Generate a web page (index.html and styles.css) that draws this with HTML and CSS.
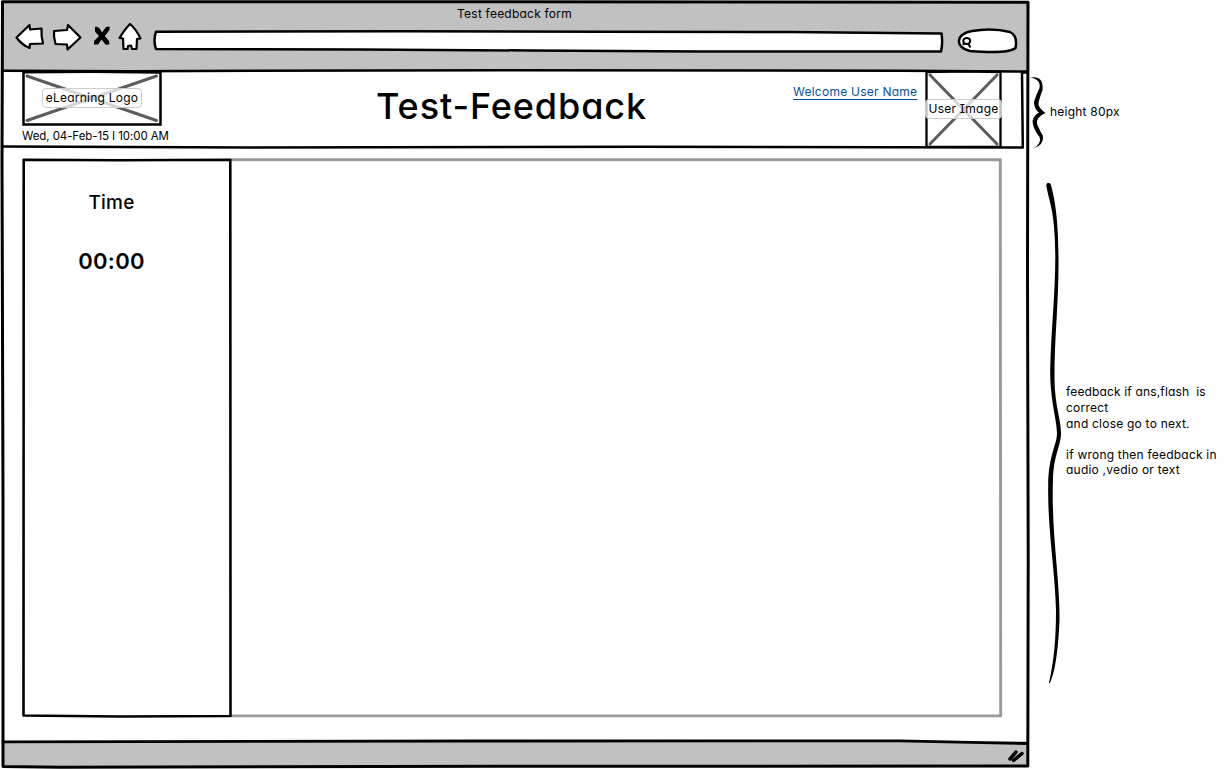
FILE: index.html
```html
<!DOCTYPE html>
<html lang="en">
<head>
<meta charset="utf-8">
<title>Test feedback form</title>
<link rel="stylesheet" href="styles.css">
</head>
<body>
<main class="browser">
  <header class="chrome">
    <div class="window-title"><span>Test feedback form</span></div>
    <nav class="toolbar">
      <svg class="nav-icons" width="130" height="32" viewBox="14 21 130 32">
        <g fill="#fff" stroke="#000" stroke-width="2.200" stroke-linejoin="round" stroke-linecap="round">
          <path d="M16.500 37.500 29.500 25 30 29.500 41.500 28.500Q41 36 43 43.500L30 44 29.500 48Q22 45 16.500 37.500Z"/>
          <path d="M54 31 67 30 68 25 80.500 37.500 67.500 49.500 67 44.500 55.500 44Q53.500 37 54 31Z"/>
          <path d="M130 24Q125 29 119.500 38L123 38.500 123.500 49 127.500 49 128 46 131 45.500 132 49 136.500 49 137 39 140.500 38.500Q136 29 130 24Z"/>
        </g>
        <path d="M95 27Q99 26 102 32.500L106 27 109.500 26.500 109.500 30 104.800 36 109 41 109.500 44 106 45 101.500 39.500 98 44.500 94 44.500 94 41 99 36 95 31.500 95 27Z"/>
      </svg>
      <svg class="address" width="792" height="24" viewBox="152 29 792 24">
        <path d="M156 31.700 400 31.200 600 31.700 790 32 941.500 33.500Q943 43 941 51.500L700 51.500 530 50.500 360 49.500 156 49Q153 41 156 31.700Z" fill="#fff" stroke="#000" stroke-width="2.500" stroke-linejoin="round"/>
      </svg>
      <svg class="search" width="64" height="28" viewBox="956 27 64 28">
        <path d="M972 31Q992 27.500 1010 32Q1018 36 1015.500 48C1010 53 990 52.500 970 51C954 47 956 34 972 31Z" fill="#fff" stroke="#000" stroke-width="2.500"/>
        <ellipse cx="966.700" cy="41" rx="3.500" ry="3" fill="none" stroke="#000" stroke-width="2"/>
        <path d="M968 43.500 970.500 47.500M962.500 44.500 965 43.500" fill="none" stroke="#000" stroke-width="2"/>
      </svg>
    </nav>
  </header>
  <section class="banner">
    <div class="brand">
      <div class="image-box logo">
        <svg class="sketch" viewBox="0 0 140 55"><path d="M5 5 134.500 49.500M134.500 5 5 49.500" stroke="#5c5c5c" stroke-width="3" stroke-linecap="round"/><path d="M1.500 1.300 70 .8 138.500 1.500V53.500H1.500Z" fill="none" stroke="#000" stroke-width="2.500"/></svg>
        <span class="tag logo-tag"><span>eLearning Logo</span></span>
      </div>
      <div class="date">Wed, 04-Feb-15 I 10:00 AM</div>
    </div>
    <h1>Test-Feedback</h1>
    <a class="welcome">Welcome User Name</a>
    <div class="image-box user">
      <svg class="sketch" viewBox="0 0 77 78"><path d="M5 5 72 74M72 5 5 74" stroke="#5c5c5c" stroke-width="3" stroke-linecap="round"/><path d="M1.500 2 40 1.300 75.500 2V77H1.500Z" fill="none" stroke="#000" stroke-width="2.300"/></svg>
      <span class="tag user-tag"><span>User <i>I</i>mage</span></span>
    </div>
  </section>
  <section class="content">
    <aside class="timer">
      <div class="timer-label">Time</div>
      <div class="timer-value">00:00</div>
    </aside>
    <div class="stage"></div>
  </section>
  <footer class="status"></footer>
  <svg class="sketch" viewBox="0 0 1032 769">
    <g fill="none" stroke="#000" stroke-width="3" stroke-linejoin="round" stroke-linecap="round">
      <path d="M2.500 1.800 500 1.800 1028 2.200 1027.500 270 1028.200 560 1027.800 766 500 766.300 60 767.300 3 766.500 3 500 2 160Z"/>
      <path d="M3 70.800 130 71.200 500 70.200 900 70.800 1026.500 71.500" stroke-width="2.500"/>
      <path d="M3 146.500 250 147.500 640 146.700 1022 147.500M1022 72 1022.800 147.500M1022 72.500H1026" stroke-width="2.500"/>
      <path d="M3 741.800 480 741 900 740.800 1026 743.500" stroke-width="2.800"/>
    </g>
    <g fill="none" stroke="#999" stroke-width="2.900" stroke-linejoin="round"><path d="M231 159.700H1000.300L1000.700 715.900H231"/></g>
    <path d="M23.700 159.800 120 160.300 230.300 159.700 230.500 716 120 716.500 23.500 715.500Z" fill="none" stroke="#000" stroke-width="2.600" stroke-linejoin="round"/>
    <path d="M1010 759 1016 752M1013.500 760.500 1022 753.500" stroke="#000" stroke-width="3.500" stroke-linecap="round"/>
  </svg>
</main>
<aside class="notes">
  <svg class="brace-small" width="16" height="76" viewBox="1030 75 16 76"><path d="M1030 77.500Q1044 75 1042.500 90Q1038 102 1038.500 105Q1040 109 1045.500 113Q1036 117 1037 124Q1040 131 1043 136Q1044 145 1033.500 148.500Q1042 143 1039.500 137Q1033 129 1032.500 121Q1034 115 1039 112.500Q1034 109 1034 102Q1036 95 1039.500 88Q1041 79 1030 77.500Z"/></svg>
  <svg class="brace-large" width="16" height="504" viewBox="1046 181 16 504"><path d="M1046.200 185C1047 182 1050 182 1051 185C1055 200 1058.700 220 1058.500 265C1058.500 305 1054.300 340 1054.500 380C1054.800 405 1061 420 1061 433C1061 446 1053.500 455 1053 480C1051 530 1060 580 1059.500 620C1058.500 645 1056 670 1050 683H1049C1054 660 1056 640 1056 610C1055 570 1047.500 530 1048.200 485C1048.500 455 1057 445 1057 433C1057 420 1050 400 1050.200 370C1051 330 1055.300 295 1055.300 255C1055 210 1049 202 1046.200 185Z"/></svg>
  <p class="height-note">height 80px</p>
  <p class="flow-note"><span class="first-line">feedback if ans,flash&nbsp; is</span><br>correct<br>and close go to next.</p>
  <p class="flow-note second">if wrong then feedback in<br>audio ,vedio or text</p>
</aside>
</body>
</html>
```
FILE: styles.css
```css
* { box-sizing: border-box; }
body {
  margin: 0;
  width: 1226px;
  height: 769px;
  display: flex;
  overflow: hidden;
  background: #fff;
  color: #000;
  font: 12px/16px Inter, Lato, sans-serif;
  letter-spacing: .22px;
  font-feature-settings: "cv11";
}
svg { display: block; flex: none; }
.browser {
  position: relative;
  width: 1032px;
  height: 769px;
  padding: 2px 4px 2px 3px;
  display: flex;
  flex-direction: column;
}
.sketch { position: absolute; inset: 0; width: 100%; height: 100%; pointer-events: none; }
.chrome { height: 69px; background: #c1c1c1; }
.window-title { height: 19px; padding: 4px 2px 0 0; text-align: center; }
.toolbar { display: flex; padding-left: 11px; }
.address { margin: 8px 0 0 8px; }
.search { margin: 6px 0 0 12px; }
.banner { height: 76px; display: flex; padding-left: 19px; }
.brand { width: 180px; }
.image-box { position: relative; display: flex; align-items: center; justify-content: center; }
.logo { width: 140px; height: 55px; }
.logo .tag { margin-bottom: 1px; }
.user { width: 77px; height: 78px; margin: -1px 0 0 6px; }
.tag {
  position: relative;
  height: 20px;
  display: flex;
  align-items: center;
  justify-content: center;
  white-space: nowrap;
  border: 1px solid #ccc;
  border-radius: 4px;
  background: rgba(255, 255, 255, .75);
}
.logo-tag { width: 100px; }
.user-tag { width: 77px; }
.tag i { font-style: normal; font-feature-settings: "cv08"; }
.date { margin-top: 2px; white-space: nowrap; font-size: 11.5px; letter-spacing: -.08px; }
h1 {
  margin: 17px 0 0 174px;
  width: 300px;
  font-size: 36px;
  line-height: 36px;
  font-weight: 500;
  letter-spacing: .9px;
  white-space: nowrap;
}
.welcome {
  width: 126px;
  margin: 13px 0 0 117px;
  color: #094f95;
  letter-spacing: .25px;
  white-space: nowrap;
  text-decoration: underline;
  text-underline-offset: 3px;
}
.content { height: 594px; padding: 13px 27px 25px 21px; display: flex; }
.timer { width: 207px; padding: 31px 32px 0 0; text-align: center; }
.timer-label { font-size: 19px; line-height: 24px; font-weight: 500; }
.timer-value { margin-top: 34px; font-size: 22px; line-height: 24px; font-weight: 600; letter-spacing: .3px; }
.stage { flex: 1; }
.status { flex: 1; background: #c1c1c1; }
.notes {
  width: 194px;
  display: grid;
  grid-template-columns: 14px 4px 16px 1fr;
  grid-template-rows: 181px 203px 63px 1fr;
  margin-left: -2px;
}
.notes p { margin: 0; white-space: nowrap; }
.brace-small { grid-area: 1 / 1 / 2 / 3; margin-top: 75px; }
.brace-large { grid-area: 2 / 3 / 5 / 4; margin-left: -2px; }
.height-note { grid-area: 1 / 3 / 2 / 5; padding: 104px 0 0 2px; }
.flow-note { grid-column: 4; grid-row: 3; padding-left: 2px; }
.first-line { letter-spacing: .15px; }
.second { grid-row: 4; line-height: 15px; }
```
